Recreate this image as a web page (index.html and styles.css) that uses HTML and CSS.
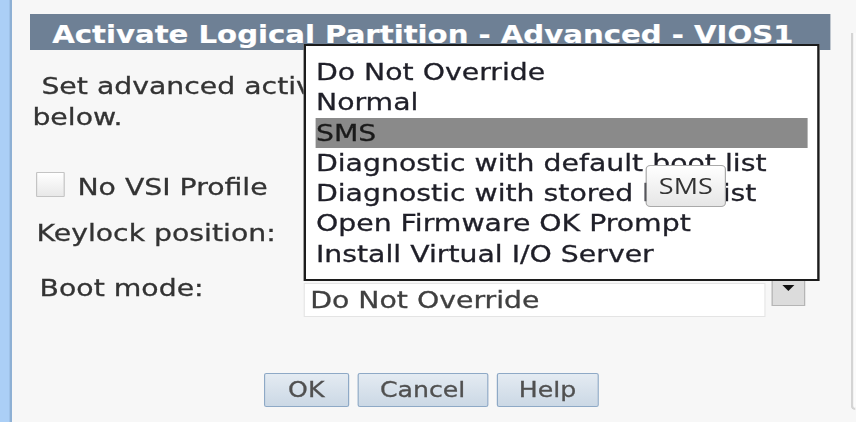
FILE: index.html
```html
<!DOCTYPE html>
<html lang="en">
<head>
<meta charset="utf-8">
<title>Activate Logical Partition - Advanced - VIOS1</title>
<link rel="stylesheet" href="styles.css">
</head>
<body>
<div class="frame">
  <div class="strip"></div>
  <div class="main">
    <div class="titlebar">Activate Logical Partition - Advanced - VIOS1</div>
    <p class="intro">&nbsp;Set advanced activation settings for the partition<br>below.</p>
    <div class="check-row">
      <span class="checkbox"></span>
      <span class="check-label">No VSI Profile</span>
    </div>
    <div class="form-row keylock-row">
      <span class="label">Keylock position:</span>
      <div class="select"></div>
      <span class="arrow-btn"><span class="tri"></span></span>
    </div>
    <div class="form-row boot-row">
      <span class="label boot-label">Boot mode:</span>
      <div class="select"><span class="select-text">Do Not Override</span></div>
      <span class="arrow-btn"><span class="tri"></span></span>
    </div>
    <div class="buttons">
      <button class="btn btn-ok">OK</button>
      <button class="btn btn-cancel">Cancel</button>
      <button class="btn btn-help">Help</button>
    </div>
  </div>
  <div class="side-panel"></div>

  <ul class="dropdown">
    <li>Do Not Override</li>
    <li>Normal</li>
    <li class="selected">SMS</li>
    <li>Diagnostic with default boot list</li>
    <li>Diagnostic with stored boot list</li>
    <li>Open Firmware OK Prompt</li>
    <li>Install Virtual I/O Server</li>
  </ul>
  <div class="tooltip">SMS</div>
</div>
</body>
</html>
```
FILE: styles.css
```css
html, body {
  margin: 0;
  padding: 0;
  width: 856px;
  height: 422px;
  overflow: hidden;
  background: #f7f7f7;
}

.frame {
  position: relative;
  width: 713px;
  height: 422px;
  display: flex;
  transform: scaleX(1.2);
  transform-origin: 0 0;
  font-family: "DejaVu Sans", Verdana, sans-serif;
  color: #333333;
  -webkit-text-stroke: 0.3px currentColor;
}

.strip {
  width: 7.5px;
  flex: none;
  background: #abcff6;
  border-right: 2.5px solid #8eb0d4;
}

.main {
  flex: 1;
  display: flex;
  flex-direction: column;
  padding-top: 14px;
  background: #f7f7f7;
}

.titlebar {
  margin-left: 15px;
  width: 648.5px;
  height: 32px;
  padding: 4px 0 0 19px;
  background: #6e8095;
  color: #ffffff;
  font-weight: bold;
  font-size: 24.3px;
  line-height: 33px;
  white-space: nowrap;
  overflow: hidden;
  -webkit-text-stroke: 0.2px #ffffff;
}

.intro {
  margin: 20.5px 0 0 17.5px;
  font-size: 23.6px;
  line-height: 31px;
}

.check-row {
  display: flex;
  align-items: center;
  margin: 39.5px 0 0 20px;
  height: 25px;
}

.checkbox {
  width: 22px;
  height: 23px;
  border: 1px solid #c4c4c4;
  background: linear-gradient(#ffffff, #e8e8e8);
  border-radius: 1px;
}

.check-label {
  margin-left: 11px;
  font-size: 23.6px;
  line-height: 31px;
  padding-top: 6px;
}

.form-row {
  display: flex;
  align-items: flex-start;
  margin-left: 21px;
}

.keylock-row {
  margin-top: 20.5px;
  height: 31px;
}

.boot-row {
  margin-top: 24px;
}

.label {
  width: 222px;
  flex: none;
  font-size: 23.6px;
  line-height: 31px;
}

.boot-label {
  padding-left: 2.5px;
  width: 219.5px;
}

.select {
  width: 383.7px;
  height: 32px;
  margin-top: 10.5px;
  background: #ffffff;
  border: 1px solid #e4e4e4;
  display: flex;
  align-items: center;
}

.keylock-row .select {
  margin-top: 0;
}

.select-text {
  padding-left: 5px;
  font-size: 23.6px;
  color: #404040;
}

.arrow-btn {
  width: 26px;
  height: 26px;
  margin-left: 5px;
  margin-top: 5px;
  background: #dcdcdc;
  border: 1px solid #b5b5b5;
  display: flex;
  justify-content: center;
  align-items: flex-start;
}

.keylock-row .arrow-btn {
  margin-top: 0;
}

.tri {
  margin-top: 6px;
  width: 0;
  height: 0;
  border-left: 5.5px solid transparent;
  border-right: 5.5px solid transparent;
  border-top: 6px solid #111;
}

.buttons {
  display: flex;
  justify-content: center;
  gap: 7px;
  margin-top: 56px;
}

.btn {
  height: 34px;
  padding: 0;
  border: 1.5px solid #8ea9c6;
  border-radius: 2px;
  background: linear-gradient(#e4ebf2, #cbd8e5);
  font-family: "DejaVu Sans", Verdana, sans-serif;
  font-size: 21px;
  color: #505050;
  -webkit-text-stroke: 0.3px #505050;
}

.btn-ok { width: 71px; }
.btn-cancel { width: 109px; }
.btn-help { width: 85px; }

.side-panel {
  width: 2px;
  flex: none;
  margin-top: 33px;
  height: 375px;
  border-left: 2px solid #d4d4d4;
  border-bottom: 2px solid #d4d4d4;
  border-bottom-left-radius: 5px;
  background: #fbfbfb;
}

.dropdown {
  position: absolute;
  left: 253.3px;
  top: 44px;
  width: 410px;
  margin: 0;
  padding: 11px 8px 10px 8px;
  list-style: none;
  background: #ffffff;
  border: 2px solid #1c1c1c;
  font-size: 23.6px;
  line-height: 30.3px;
  color: #1f1f28;
  white-space: nowrap;
}

.dropdown li.selected {
  background: #8a8a8a;
  color: #1a1a1a;
}

.tooltip {
  position: absolute;
  left: 538px;
  top: 165px;
  width: 65px;
  height: 40px;
  border: 1px solid #a9a9a9;
  border-radius: 4px;
  background: linear-gradient(#ffffff, #e6e6e6);
  font-family: "Open Sans", "Noto Sans", sans-serif;
  font-size: 22.5px;
  line-height: 40px;
  text-align: center;
  color: #333;
  -webkit-text-stroke: 0;
}
```
